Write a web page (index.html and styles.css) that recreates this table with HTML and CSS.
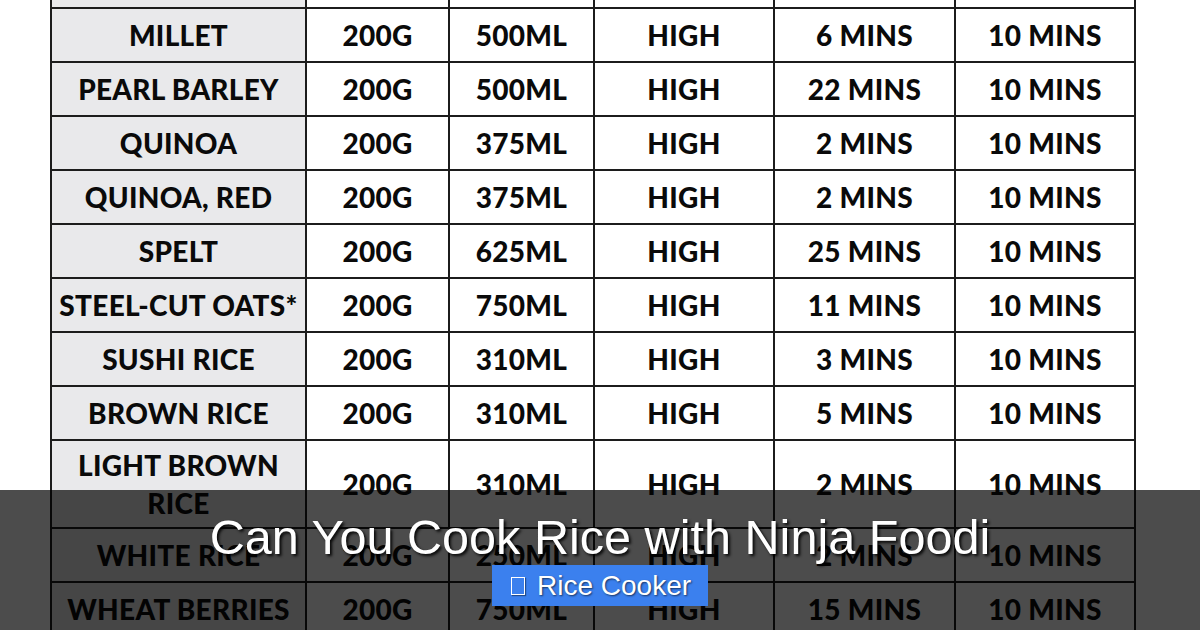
FILE: index.html
```html
<!DOCTYPE html>
<html lang="en">
<head>
<meta charset="utf-8">
<title>Can You Cook Rice with Ninja Foodi</title>
<link rel="stylesheet" href="styles.css">
</head>
<body>
<div class="page">
  <div class="sheet">
    <table class="chart">
      <colgroup>
        <col class="c-name"><col class="c-amt"><col class="c-liq"><col class="c-pres"><col class="c-time"><col class="c-rel">
      </colgroup>
      <tbody>
        <tr><td class="name">BULGUR</td><td>200G</td><td>500ML</td><td>HIGH</td><td>3 MINS</td><td>10 MINS</td></tr>
        <tr><td class="name">MILLET</td><td>200G</td><td>500ML</td><td>HIGH</td><td>6 MINS</td><td>10 MINS</td></tr>
        <tr><td class="name">PEARL BARLEY</td><td>200G</td><td>500ML</td><td>HIGH</td><td>22 MINS</td><td>10 MINS</td></tr>
        <tr><td class="name">QUINOA</td><td>200G</td><td>375ML</td><td>HIGH</td><td>2 MINS</td><td>10 MINS</td></tr>
        <tr><td class="name">QUINOA, RED</td><td>200G</td><td>375ML</td><td>HIGH</td><td>2 MINS</td><td>10 MINS</td></tr>
        <tr><td class="name">SPELT</td><td>200G</td><td>625ML</td><td>HIGH</td><td>25 MINS</td><td>10 MINS</td></tr>
        <tr><td class="name">STEEL-CUT OATS*</td><td>200G</td><td>750ML</td><td>HIGH</td><td>11 MINS</td><td>10 MINS</td></tr>
        <tr><td class="name">SUSHI RICE</td><td>200G</td><td>310ML</td><td>HIGH</td><td>3 MINS</td><td>10 MINS</td></tr>
        <tr><td class="name">BROWN RICE</td><td>200G</td><td>310ML</td><td>HIGH</td><td>5 MINS</td><td>10 MINS</td></tr>
        <tr class="tall"><td class="name">LIGHT BROWN<br>RICE</td><td>200G</td><td>310ML</td><td>HIGH</td><td>2 MINS</td><td>10 MINS</td></tr>
        <tr><td class="name">WHITE RICE</td><td>200G</td><td>250ML</td><td>HIGH</td><td>2 MINS</td><td>10 MINS</td></tr>
        <tr><td class="name">WHEAT BERRIES</td><td>200G</td><td>750ML</td><td>HIGH</td><td>15 MINS</td><td>10 MINS</td></tr>
      </tbody>
    </table>
  </div>
  <div class="overlay">
    <h1 class="title">Can You Cook Rice with Ninja Foodi</h1>
    <div class="badge"><span class="tofu"></span><span class="badge-text">Rice Cooker</span></div>
  </div>
</div>
</body>
</html>
```

FILE: styles.css
```css
* { box-sizing: border-box; }
html, body { margin: 0; padding: 0; background: #ffffff; }
.page {
  position: relative;
  width: 1200px;
  height: 630px;
  overflow: hidden;
  background: #ffffff;
}
.sheet {
  padding-left: 50px;
  margin-top: -47px;
}
.chart {
  border-collapse: collapse;
  table-layout: fixed;
  width: 1084px;
  font-family: "Lato", "DejaVu Sans", sans-serif;
  font-weight: 900;
  font-size: 28px;
  color: #0a0a0a;
}
.c-name { width: 255px; }
.c-amt { width: 143px; }
.c-liq { width: 145px; }
.c-pres { width: 180px; }
.c-time { width: 181px; }
.c-rel { width: 180px; }
.chart td {
  border: 2px solid #1c1c1c;
  height: 54px;
  padding: 0 2px;
  text-align: center;
  vertical-align: middle;
  line-height: 38px;
  white-space: nowrap;
  letter-spacing: 0.3px;
}
.chart tr.tall td { height: 88px; }
.chart td.name { background: #e9e9eb; }
.overlay {
  position: absolute;
  left: 0;
  right: 0;
  bottom: 0;
  height: 140px;
  background: rgba(0, 0, 0, 0.7);
  display: flex;
  flex-direction: column;
  align-items: center;
  padding-top: 19px;
}
.title {
  margin: 0;
  font-family: "Liberation Sans", Arial, sans-serif;
  font-weight: 400;
  font-size: 48.6px;
  line-height: 56px;
  color: #ffffff;
  text-shadow: 2px 2px 3px rgba(0, 0, 0, 0.9);
}
.badge {
  display: flex;
  align-items: center;
  gap: 12px;
  background: #3b80ee;
  height: 41px;
  padding: 0 17px 0 19px;
  font-family: "Liberation Sans", Arial, sans-serif;
  font-size: 28px;
  color: #ffffff;
  text-shadow: 1px 1px 2px rgba(0, 0, 0, 0.6);
}
.badge-text { line-height: 32px; }
.tofu {
  width: 14px;
  height: 18px;
  border: 1.5px solid #ffffff;
  box-shadow: 1px 1px 1px rgba(0, 0, 0, 0.4);
}
```
